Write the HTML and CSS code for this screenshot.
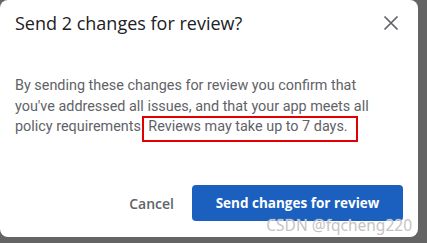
FILE: index.html
```html
<!DOCTYPE html>
<html lang="en">
  <head>
    <meta charset="UTF-8" />
    <meta name="viewport" content="width=device-width, initial-scale=1.0" />
    <title>Send changes for review</title>
    <link rel="stylesheet" href="styles.css">
  </head>
  <body>
    <div class="dialog">
      <div class="dialog-header">
        <h2>Send 2 changes for review?</h2>
        <button class="close" aria-label="Close">
          <svg width="24" height="24" viewBox="0 0 24 24">
            <path d="M5.5 5.5L18.5 18.5M18.5 5.5L5.5 18.5" stroke="#5f6368" stroke-width="1.7" fill="none" />
          </svg>
        </button>
      </div>
      <p class="dialog-body">
        By sending these changes for review you confirm that<br>
        you've addressed all issues, and that your app meets all<br>
        policy requirements. <span class="marked">Reviews may take up to 7 days.</span>
      </p>
      <div class="dialog-actions">
        <button class="cancel">Cancel</button>
        <button class="primary">Send changes for review</button>
      </div>
      <div class="watermark">CSDN @fqcheng220</div>
    </div>
  </body>
</html>
```

FILE: styles.css
```css
body {
  margin: 0;
  background-color: #646464;
  font-family: Roboto, "Liberation Sans", sans-serif;
  height: 243px;
  overflow: hidden;
}
.dialog {
  position: relative;
  width: 418px;
  height: 237px;
  background: #fff;
  border-radius: 8px;
  display: flex;
  flex-direction: column;
  box-sizing: border-box;
}
.dialog-header {
  display: flex;
  justify-content: space-between;
  align-items: center;
  padding: 11px 15px 0 15px;
}
h2 {
  margin: 0;
  font-family: "Open Sans", sans-serif;
  font-weight: 400;
  font-size: 18px;
  line-height: 24px;
  color: #202124;
}
.close {
  background: none;
  border: none;
  padding: 0;
  width: 24px;
  height: 24px;
  cursor: pointer;
}
.close svg {
  display: block;
}
.dialog-body {
  margin: 41px 0 0 0;
  padding: 0 15px;
  font-size: 14.4px;
  line-height: 20.5px;
  color: #5f6368;
  white-space: nowrap;
}
/* red annotation box round the last sentence */
.marked {
  border: 2px solid #e00000;
  padding: 0 8px 5px 4px;
  margin-left: -6px;
}
.dialog-actions {
  margin-top: auto;
  display: flex;
  justify-content: flex-end;
  align-items: center;
  gap: 18px;
  padding: 0 15px 16px 15px;
}
button {
  font-family: "Open Sans", sans-serif;
  cursor: pointer;
}
.cancel {
  background: none;
  border: none;
  padding: 0;
  font-size: 14px;
  font-weight: 600;
  color: #5f6368;
}
.primary {
  width: 211px;
  height: 36px;
  border: none;
  border-radius: 4px;
  background-color: #1b5fbf;
  color: #fff;
  font-size: 13.5px;
  font-weight: 700;
}
.watermark {
  position: absolute;
  right: 6px;
  bottom: 1px;
  font-family: "Noto Sans", sans-serif;
  font-size: 15.5px;
  color: #c4c4c4;
  text-shadow: 0 0 1px #fff;
}
```
